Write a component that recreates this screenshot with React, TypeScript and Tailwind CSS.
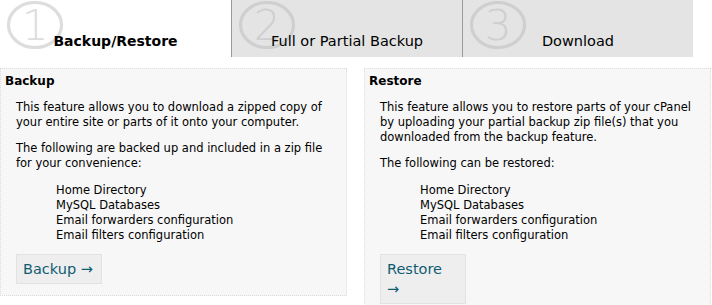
import React from 'react'

type TabProps = {
  num: string
  label: string
  active?: boolean
}

function StepTab({num, label, active}: TabProps) {
  return (
    <div
      className={
        active
          ? 'relative flex h-full w-[231px] items-end justify-center bg-white pb-[6px]'
          : 'relative flex h-full w-[231px] items-end justify-center border-l border-[#9a9a9a] bg-[#e4e4e4] pb-[6px]'
      }
    >
      <svg className="absolute left-[6px] top-[1px]" width="58" height="48" viewBox="0 0 58 48">
        <ellipse
          cx="29"
          cy="24"
          rx="26.5"
          ry="22.5"
          fill="none"
          stroke={active ? '#dddddd' : '#cfcfcf'}
          strokeWidth="3.2"
        />
        <text
          x="29"
          y="39"
          textAnchor="middle"
          fontSize="42"
          fontFamily="DejaVu Sans, sans-serif"
          fontWeight="200"
          fill={active ? '#dddddd' : '#cfcfcf'}
        >
          {num}
        </text>
      </svg>
      <span
        className={
          active
            ? 'relative text-[14px] font-bold leading-[20px] text-black'
            : 'relative text-[14.5px] leading-[20px] text-black'
        }
      >
        {label}
      </span>
    </div>
  )
}

const items = ['Home Directory', 'MySQL Databases', 'Email forwarders configuration', 'Email filters configuration']

type PanelProps = {
  title: string
  intro: string
  follow: string
  button: string
  wrapArrow?: boolean
  className?: string
}

function Panel({title, intro, follow, button, wrapArrow, className}: PanelProps) {
  return (
    <div className={'w-[347px] border border-dotted border-[#dcdcdc] bg-[#f7f7f7] pl-[4px] pt-[5px] ' + (className ?? '')}>
      <h2 className="text-[12px] font-bold leading-[15px] text-black">{title}</h2>
      <div className="pl-[11px] pr-[8px]">
        <p className="mt-[11px] text-[11.5px] leading-[15px] text-black">{intro}</p>
        <p className="mt-[11px] text-[11.5px] leading-[15px] text-black">{follow}</p>
        <ul className="mt-[12px] pl-[40px] text-[11.5px] leading-[15px] text-black">
          {items.map(item => (
            <li key={item}>{item}</li>
          ))}
        </ul>
        <button
          type="button"
          className="mt-[11px] w-[86px] border border-[#e2e2e2] bg-[#eeeeee] px-[6px] py-[4px] text-left text-[14.5px] leading-[20px] text-[#105c72]"
        >
          {button}
          {wrapArrow ? <span className="block">→</span> : ' →'}
        </button>
      </div>
    </div>
  )
}

export default function App() {
  return (
    <div className="h-[305px] w-[712px] overflow-hidden bg-white font-['DejaVu_Sans',sans-serif]">
      <div className="flex h-[57px]">
        <StepTab num="1" label="Backup/Restore" active />
        <StepTab num="2" label="Full or Partial Backup" />
        <StepTab num="3" label="Download" />
      </div>
      <div className="mt-[11px] flex items-start gap-[17px]">
        <Panel
          title="Backup"
          intro="This feature allows you to download a zipped copy of your entire site or parts of it onto your computer."
          follow="The following are backed up and included in a zip file for your convenience:"
          button="Backup"
          className="h-[228px]"
        />
        <Panel
          title="Restore"
          intro="This feature allows you to restore parts of your cPanel by uploading your partial backup zip file(s) that you downloaded from the backup feature."
          follow="The following can be restored:"
          button="Restore"
          wrapArrow
          className="h-[260px]"
        />
      </div>
    </div>
  )
}
